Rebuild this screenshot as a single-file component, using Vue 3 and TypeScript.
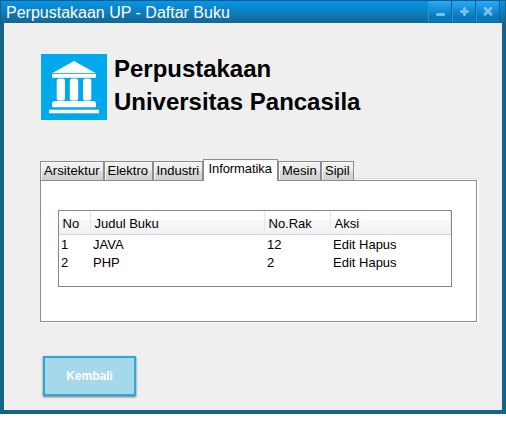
<script setup lang="ts">
import { ref } from 'vue'

interface Book {
  no: number
  title: string
  shelf: number
}

const tabs: string[] = ['Arsitektur', 'Elektro', 'Industri', 'Informatika', 'Mesin', 'Sipil']
const active = ref('Informatika')
const columns: string[] = ['No', 'Judul Buku', 'No.Rak', 'Aksi']
const books: Book[] = [
  { no: 1, title: 'JAVA', shelf: 12 },
  { no: 2, title: 'PHP', shelf: 2 },
]
</script>

<template>
  <div class="window">
    <header class="titlebar">
      <span class="caption">Perpustakaan UP - Daftar Buku</span>
      <div class="controls">
        <button class="control" aria-label="Minimize">
          <svg width="23" height="21" viewBox="0 0 23 21"><rect x="8" y="12" width="9" height="3" rx="1.2" /></svg>
        </button>
        <button class="control" aria-label="Maximize">
          <svg width="23" height="21" viewBox="0 0 23 21"><path d="M12.5 7.5v6M9.5 10.5h6" /></svg>
        </button>
        <button class="control" aria-label="Close">
          <svg width="23" height="21" viewBox="0 0 23 21"><path d="M9 7.3l6 6M15 7.3l-6 6" /></svg>
        </button>
      </div>
    </header>

    <main class="content">
      <div class="brand">
        <svg class="logo" width="66" height="66" viewBox="0 0 66 66">
          <rect width="66" height="66" fill="#00a8ec" />
          <g fill="#fff">
            <path d="M33 7L54.5 19H11.5z" />
            <rect x="11" y="19.8" width="44" height="4" />
            <rect x="15.7" y="24.5" width="8.3" height="22" rx="2.6" />
            <rect x="28.8" y="24.5" width="8.4" height="22" rx="2.6" />
            <rect x="42" y="24.5" width="8.3" height="22" rx="2.6" />
            <path d="M11 53.3V50q0-3 3-3h38q3 0 3 3v3.3z" />
            <rect x="8" y="55.7" width="50" height="3.6" />
          </g>
        </svg>
        <h1 class="heading">Perpustakaan<br />Universitas Pancasila</h1>
      </div>

      <nav class="tabs">
        <button
          v-for="tab in tabs"
          :key="tab"
          class="tab"
          :class="[tab.toLowerCase(), { selected: tab === active }]"
          @click="active = tab"
        >{{ tab }}</button>
        <span class="rest"></span>
      </nav>

      <section class="panel">
        <div class="table">
          <div class="row head">
            <span v-for="column in columns" :key="column" class="cell">{{ column }}</span>
          </div>
          <div v-for="book in books" :key="book.no" class="row">
            <span class="cell">{{ book.no }}</span>
            <span class="cell">{{ book.title }}</span>
            <span class="cell">{{ book.shelf }}</span>
            <span class="cell">Edit Hapus</span>
          </div>
        </div>
      </section>

      <button class="back">Kembali</button>
    </main>
  </div>
</template>

<style>
body {
  background: #fff;
}
</style>

<style scoped>
* {
  box-sizing: border-box;
}
button {
  margin: 0;
  padding: 0;
  border: 0;
  font: inherit;
  color: inherit;
}
.window {
  width: 506px;
  height: 414px;
  display: flex;
  flex-direction: column;
  background: #156388;
  font: 13px/16px "Liberation Sans", Arial, sans-serif;
  color: #000;
}
.titlebar {
  height: 23px;
  display: flex;
  justify-content: space-between;
  margin: 0 1px;
  padding: 0 5px;
  border-top: 1px solid #0b5c8a;
  background: linear-gradient(#0496e8, #156792);
}
.caption {
  font-size: 16px;
  line-height: 23px;
  color: #fff;
  white-space: nowrap;
}
.controls {
  display: flex;
  gap: 1px;
  height: 21px;
  padding-right: 1px;
  background: #08649c;
}
.control {
  width: 23px;
  height: 21px;
  background: linear-gradient(#2aa9f8, #0779ba 75%);
  border-left: 1px solid #1e98e0;
}
.control svg {
  display: block;
  margin-left: -1px;
  fill: #79c1e9;
}
.control path {
  fill: none;
  stroke: #79c1e9;
  stroke-width: 3;
  stroke-linecap: round;
}
.content {
  flex: 1;
  margin: 0 4px 4px;
  padding: 31px 23px 0 36px;
  background: #efefef;
}
.brand {
  display: flex;
  gap: 7px;
  padding-left: 1px;
  height: 105px;
}
.logo {
  flex: none;
}
.heading {
  margin: -2px 0 0;
  font-size: 24px;
  line-height: 33px;
  font-weight: bold;
  letter-spacing: -0.02px;
  white-space: nowrap;
}
.tabs {
  display: flex;
  align-items: flex-end;
  height: 21px;
}
.tab {
  height: 19px;
  border: 1px solid #898c95;
  border-bottom: 0;
  background: linear-gradient(#f2f2f2, #ebebeb 50%, #dcdcdc 50%, #cfcfcf);
  box-shadow: inset 1px 1px #fafafa;
  line-height: 18px;
  text-align: left;
  white-space: nowrap;
}
.arsitektur {
  width: 64px;
  padding-left: 3px;
  letter-spacing: 0.08px;
}
.elektro {
  width: 49px;
  padding-left: 2.5px;
}
.industri {
  width: 50px;
  padding-left: 2.5px;
}
.informatika {
  width: 75px;
  padding-left: 4.5px;
  letter-spacing: -0.08px;
}
.mesin {
  width: 43px;
  padding-left: 3px;
}
.sipil {
  width: 33px;
  padding-left: 3px;
}
.tab.selected {
  height: 22px;
  margin-bottom: -1px;
  padding-bottom: 3px;
  background: #fff;
  z-index: 1;
}
.rest {
  flex: 1;
  height: 2px;
  border-top: 1px solid #dcdce2;
  background: #fff;
}
.panel {
  width: 437px;
  height: 142px;
  padding: 29px 17px;
  border: 1px solid #898c95;
  background: #fff;
  box-shadow: 1px 1px #fff, 2px 1px #fff, 2px 0 #fff;
}
.table {
  width: 394px;
  height: 77px;
  border: 1px solid #828790;
}
.row {
  display: grid;
  grid-template-columns: 32px 174px 66px 120px;
  height: 18px;
  line-height: 18px;
}
.row .cell {
  padding-left: 2px;
}
.head {
  height: 24px;
  margin-bottom: 1px;
  border-bottom: 1px solid #d5d5d5;
  background: linear-gradient(#fff 40%, #f7f8fa 40%, #f1f2f4);
  line-height: 25px;
}
.head .cell {
  padding-left: 3.5px;
  border-right: 1px solid #e5e7eb;
}
.back {
  display: block;
  width: 93px;
  height: 40px;
  margin: 34px 0 0 3px;
  padding-bottom: 1px;
  border: 2px solid #2fa8d5;
  background: #a5d8eb;
  box-shadow: 0 1px 2px rgba(0, 0, 0, 0.55);
  color: #fff;
  font-size: 12px;
  font-weight: bold;
}
</style>
